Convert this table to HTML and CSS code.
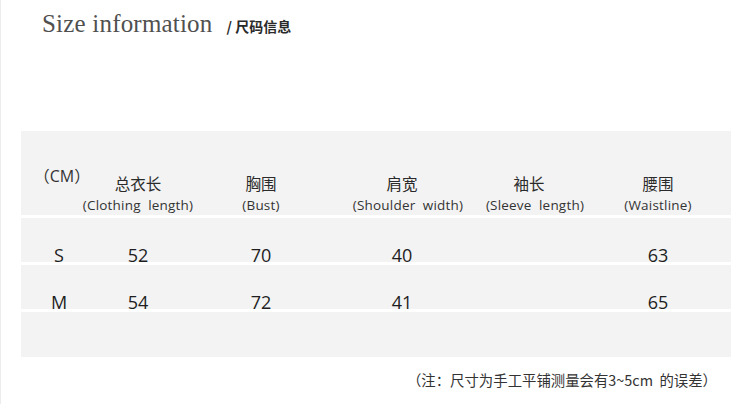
FILE: index.html
```html
<!DOCTYPE html>
<html lang="zh">
<head>
<meta charset="utf-8">
<title>Size information</title>
<link rel="stylesheet" href="styles.css">
</head>
<body>
<div class="page">
  <h1 class="title"><span class="title-en">Size information</span><span class="title-cn">/ 尺码信息</span></h1>
  <div class="panel">
    <div class="row head">
      <div class="cell unit">（CM）</div>
      <div class="cell"><span class="cn">总衣长</span><span class="en">(Clothing&nbsp;&nbsp;length)</span></div>
      <div class="cell"><span class="cn">胸围</span><span class="en">(Bust)</span></div>
      <div class="cell"><span class="cn">肩宽</span><span class="en shift">(Shoulder&nbsp;&nbsp;width)</span></div>
      <div class="cell"><span class="cn">袖长</span><span class="en shift">(Sleeve&nbsp;&nbsp;length)</span></div>
      <div class="cell"><span class="cn">腰围</span><span class="en">(Waistline)</span></div>
    </div>
    <div class="row data">
      <div class="cell">S</div>
      <div class="cell">52</div>
      <div class="cell">70</div>
      <div class="cell">40</div>
      <div class="cell"></div>
      <div class="cell">63</div>
    </div>
    <div class="row data">
      <div class="cell">M</div>
      <div class="cell">54</div>
      <div class="cell">72</div>
      <div class="cell">41</div>
      <div class="cell"></div>
      <div class="cell">65</div>
    </div>
    <div class="row empty"></div>
  </div>
  <p class="note">（注：尺寸为手工平铺测量会有3~5cm&nbsp;&nbsp;的误差）</p>
</div>
</body>
</html>
```

FILE: styles.css
```css
html, body {
  margin: 0;
  padding: 0;
  background: #ffffff;
}

.page {
  width: 750px;
  height: 404px;
  box-sizing: border-box;
  border-left: 1px solid #ececec;
  padding: 0 19px 0 20px;
  font-family: "Open Sans", "Noto Sans CJK SC", sans-serif;
  color: #222;
}

.title {
  margin: 0;
  padding: 10px 0 0 21px;
  height: 131px;
  box-sizing: border-box;
  display: flex;
  align-items: baseline;
  font-weight: normal;
}

.title-en {
  font-family: "Liberation Serif", "DejaVu Serif", serif;
  font-size: 25px;
  color: #505050;
  letter-spacing: 0.2px;
}

.title-cn {
  margin-left: 14px;
  font-family: "Noto Sans CJK SC", sans-serif;
  font-size: 14px;
  font-weight: bold;
  color: #2a2a2a;
}

.panel {
  width: 710px;
  display: flex;
  flex-direction: column;
  gap: 3px;
}

.row {
  display: grid;
  grid-template-columns: 76px 82px 164px 118px 136px 122px 12px;
  background: #f3f3f3;
}

.cell {
  text-align: center;
}

.head {
  height: 84px;
  align-items: end;
}

.head .cell {
  display: flex;
  flex-direction: column;
  align-items: center;
  padding-bottom: 1px;
}

.head .unit {
  font-size: 16px;
  padding-bottom: 28px;
  color: #333;
  padding-left: 6px;
}

.cn {
  font-family: "Noto Sans CJK SC", sans-serif;
  font-size: 15.5px;
  line-height: 20px;
  color: #2a2a2a;
}

.en {
  margin-top: 3px;
  font-size: 13.5px;
  line-height: 18px;
  color: #333;
  white-space: nowrap;
  letter-spacing: 0.2px;
}

.en.shift {
  margin-left: 12px;
}

.data {
  height: 44px;
  align-items: end;
  font-size: 18px;
  line-height: 22px;
  color: #1e1e1e;
}

.data .cell {
  transform: translateY(4px);
}

.empty {
  height: 45px;
}

.note {
  margin: 0;
  padding: 12px 14px 0 0;
  text-align: right;
  font-family: "Noto Sans CJK SC", sans-serif;
  font-size: 14.4px;
  color: #333;
}
```
